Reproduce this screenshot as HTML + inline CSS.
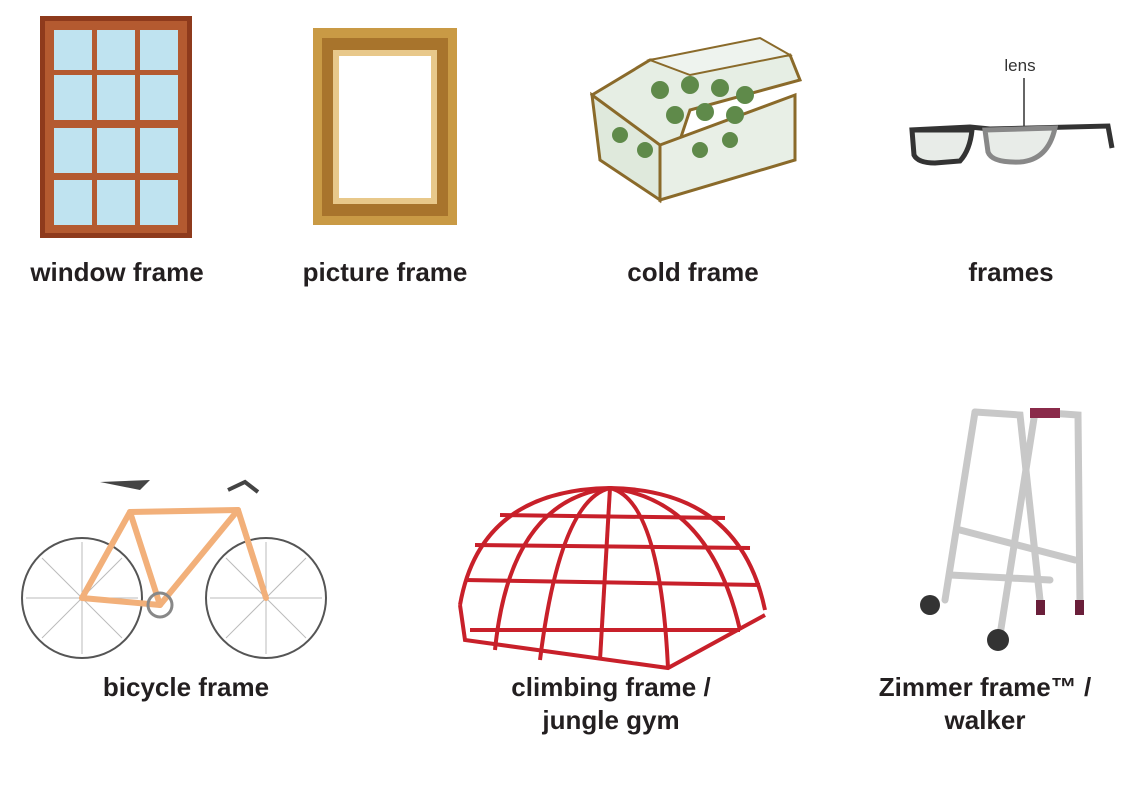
<!DOCTYPE html>
<html><head><meta charset="utf-8"><style>
body{margin:0;width:1132px;height:785px;background:#fff;position:relative;overflow:hidden;font-family:"Liberation Sans",sans-serif}
.l{position:absolute;font-weight:bold;font-size:26px;color:#231f20;text-align:center;line-height:33px;white-space:nowrap;transform:translateX(-50%)}
svg{position:absolute;left:0;top:0}
</style></head><body>
<svg width="1132" height="785" viewBox="0 0 1132 785">
<rect x="40" y="16" width="152" height="222" fill="#8e3a1c"/>
<rect x="45" y="21" width="142" height="212" fill="#b45a30"/>
<g fill="#bfe3f0">
<rect x="54" y="30" width="38" height="40"/><rect x="97" y="30" width="38" height="40"/><rect x="140" y="30" width="38" height="40"/>
<rect x="54" y="75" width="38" height="45"/><rect x="97" y="75" width="38" height="45"/><rect x="140" y="75" width="38" height="45"/>
<rect x="54" y="128" width="38" height="45"/><rect x="97" y="128" width="38" height="45"/><rect x="140" y="128" width="38" height="45"/>
<rect x="54" y="180" width="38" height="45"/><rect x="97" y="180" width="38" height="45"/><rect x="140" y="180" width="38" height="45"/>
</g>
<rect x="313" y="28" width="144" height="197" fill="#c99a45"/>
<rect x="322" y="38" width="126" height="178" fill="#a8742c"/>
<rect x="333" y="50" width="104" height="154" fill="#e8c88a"/>
<rect x="339" y="56" width="92" height="142" fill="#fff"/>
<polygon points="592,95 650,60 790,55 800,80 690,110 660,200" fill="#e6eee4" stroke="#8a6a2a" stroke-width="3"/>
<polygon points="592,95 660,145 660,200 600,160" fill="#dfe9dc" stroke="#8a6a2a" stroke-width="3"/>
<polygon points="660,145 795,95 795,160 660,200" fill="#e8efe6" stroke="#8a6a2a" stroke-width="3"/>
<polygon points="650,60 760,38 790,55 690,75" fill="#eef3ee" stroke="#8a6a2a" stroke-width="2"/>
<g fill="#5f8a4a"><circle cx="660" cy="90" r="9"/><circle cx="690" cy="85" r="9"/><circle cx="720" cy="88" r="9"/><circle cx="745" cy="95" r="9"/><circle cx="675" cy="115" r="9"/><circle cx="705" cy="112" r="9"/><circle cx="735" cy="115" r="9"/><circle cx="620" cy="135" r="8"/><circle cx="645" cy="150" r="8"/><circle cx="700" cy="150" r="8"/><circle cx="730" cy="140" r="8"/></g>
<text x="1020" y="71" font-size="17" fill="#333" text-anchor="middle">lens</text>
<line x1="1024" y1="78" x2="1024" y2="148" stroke="#333" stroke-width="1.5"/>
<path d="M910 130 L970 127 L990 129 L1108 126 L1112 148" fill="none" stroke="#333" stroke-width="5"/>
<path d="M912 130 L914 155 Q918 163 935 163 L960 161 Q970 150 972 130 Z" fill="#e8ece8" stroke="#333" stroke-width="5"/>
<path d="M985 130 L988 152 Q992 163 1020 162 Q1048 160 1055 128 Z" fill="#e8ece8" stroke="#888" stroke-width="5"/>
<g fill="none" stroke="#555" stroke-width="2">
<circle cx="82" cy="598" r="60"/><circle cx="266" cy="598" r="60"/>
</g>
<g stroke="#bbb" stroke-width="1">
<path d="M26 598H138M82 542V654M42 558L122 638M42 638L122 558M210 598H322M266 542V654M226 558L306 638M226 638L306 558"/>
</g>
<g fill="none" stroke="#f2b07a" stroke-width="6" stroke-linecap="round">
<line x1="130" y1="512" x2="238" y2="510"/><line x1="130" y1="512" x2="160" y2="605"/><line x1="238" y1="510" x2="160" y2="605"/>
<line x1="160" y1="605" x2="82" y2="598"/><line x1="130" y1="512" x2="82" y2="598"/><line x1="238" y1="510" x2="266" y2="598"/>
</g>
<circle cx="160" cy="605" r="12" fill="none" stroke="#888" stroke-width="3"/>
<path d="M100 482 L150 480 L140 490 Z" fill="#444"/><path d="M228 490 L245 482 L258 492" stroke="#444" stroke-width="4" fill="none"/>
<g fill="none" stroke="#c8202a" stroke-width="4">
<path d="M460 605 Q480 490 610 488 Q740 490 765 610"/>
<path d="M495 650 Q510 500 610 488 Q710 500 740 630"/>
<path d="M540 660 Q560 500 610 488 Q660 500 668 668"/>
<path d="M600 660 L610 488"/>
<path d="M465 580 L760 585"/><path d="M475 545 L750 548"/><path d="M500 515 L725 518"/>
<path d="M460 605 L465 640 L668 668 L765 615"/><path d="M470 630 L740 630"/>
</g>
<g fill="none" stroke="#c8c8c8" stroke-width="7" stroke-linecap="round">
<path d="M975 412 L945 600"/><path d="M1035 412 L1000 635"/><path d="M1035 412 L1078 415 L1080 605"/><path d="M975 412 L1020 415 L1040 600"/><path d="M960 530 L1075 560"/><path d="M950 575 L1050 580"/>
</g>
<rect x="1030" y="408" width="30" height="10" fill="#8a2a4a"/>
<circle cx="930" cy="605" r="10" fill="#333"/><circle cx="998" cy="640" r="11" fill="#333"/>
<rect x="1075" y="600" width="9" height="15" fill="#6a1f3a"/><rect x="1036" y="600" width="9" height="15" fill="#6a1f3a"/>
</svg>
<div class="l" style="left:117px;top:256px">window frame</div>
<div class="l" style="left:385px;top:256px">picture frame</div>
<div class="l" style="left:693px;top:256px">cold frame</div>
<div class="l" style="left:1011px;top:256px">frames</div>
<div class="l" style="left:186px;top:671px">bicycle frame</div>
<div class="l" style="left:611px;top:671px">climbing frame /<br>jungle gym</div>
<div class="l" style="left:985px;top:671px">Zimmer frame™ /<br>walker</div>
</body></html>
